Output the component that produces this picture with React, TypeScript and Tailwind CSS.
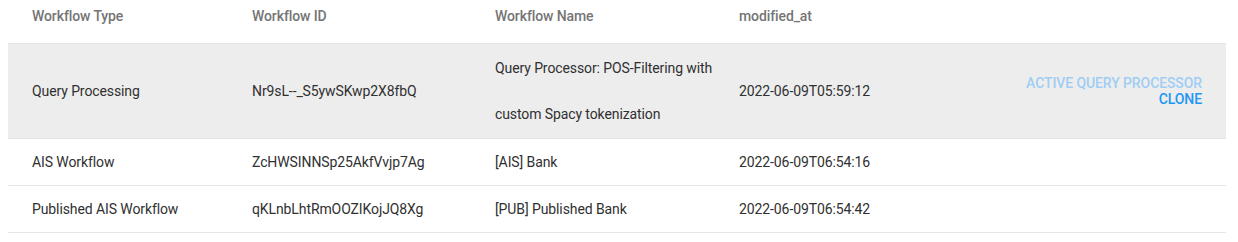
const rows = [
    {
        type: "Query Processing",
        id: "Nr9sL--_S5ywSKwp2X8fbQ",
        name: "Query Processor: POS-Filtering with custom Spacy tokenization",
        modified: "2022-06-09T05:59:12",
        active: true,
    },
    {
        type: "AIS Workflow",
        id: "ZcHWSINNSp25AkfVvjp7Ag",
        name: "[AIS] Bank",
        modified: "2022-06-09T06:54:16",
        active: false,
    },
    {
        type: "Published AIS Workflow",
        id: "qKLnbLhtRmOOZIKojJQ8Xg",
        name: "[PUB] Published Bank",
        modified: "2022-06-09T06:54:42",
        active: false,
    },
];

export default function App() {
    return (
        <div className="w-[1238px] h-[242px] bg-white px-2 font-['Roboto',sans-serif] text-sm tracking-[-0.1px]">
            <table className="w-[1218px] table-fixed border-collapse">
                <colgroup>
                    <col className="w-[220px]" />
                    <col className="w-[243px]" />
                    <col className="w-[244px]" />
                    <col className="w-[245px]" />
                    <col />
                </colgroup>
                <thead>
                    <tr className="text-left text-[#757575] font-medium">
                        <th className="pl-6 pt-[6px] pb-[17px] leading-5 font-medium">Workflow Type</th>
                        <th className="pl-6 pt-[6px] pb-[17px] leading-5 font-medium">Workflow ID</th>
                        <th className="pl-6 pt-[6px] pb-[17px] leading-5 font-medium">Workflow Name</th>
                        <th className="pl-6 pt-[6px] pb-[17px] leading-5 font-medium">modified_at</th>
                        <th />
                    </tr>
                </thead>
                <tbody className="text-[#303030]">
                    {rows.map((r) => (
                        <tr
                            key={r.id}
                            className={`border-y border-[#e6e6e6] ${r.active ? "bg-[#ededee]" : ""}`}
                        >
                            <td className="pl-6 leading-[46px] align-middle">{r.type}</td>
                            <td className="pl-6 leading-[46px] align-middle">{r.id}</td>
                            <td className={`pl-6 leading-[46px] align-middle ${r.active ? "py-px" : ""}`}>{r.name}</td>
                            <td className="pl-6 leading-[46px] align-middle">{r.modified}</td>
                            <td className="pr-6 text-right align-middle">
                                {r.active && (
                                    <div className="flex flex-col items-end font-medium uppercase leading-4">
                                        <span className="text-[#9fcdf3]">Active Query Processor</span>
                                        <span className="text-[#2196f3]">Clone</span>
                                    </div>
                                )}
                            </td>
                        </tr>
                    ))}
                </tbody>
            </table>
        </div>
    );
}
